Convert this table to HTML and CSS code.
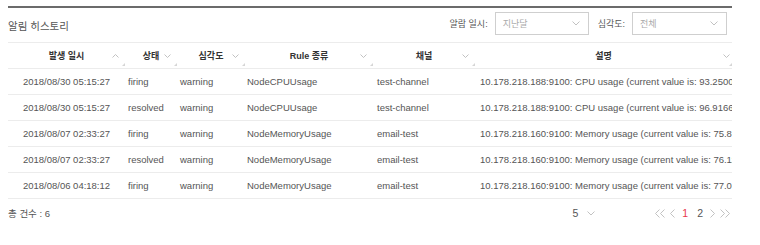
FILE: index.html
```html
<!DOCTYPE html>
<html lang="ko">
<head>
<meta charset="utf-8">
<link rel="stylesheet" href="styles.css">
</head>
<body>
<div class="panel">
  <div class="topbar">
    <div class="title">알림 히스토리</div>
    <div class="filters">
      <span class="label">알람 일시:</span>
      <div class="select"><span>지난달</span><svg class="chev" width="8" height="5" viewBox="0 0 8 5"><polyline points="0.5,0.5 4,4 7.5,0.5"/></svg></div>
      <span class="label label2">심각도:</span>
      <div class="select"><span>전체</span><svg class="chev" width="8" height="5" viewBox="0 0 8 5"><polyline points="0.5,0.5 4,4 7.5,0.5"/></svg></div>
    </div>
  </div>
  <div class="table">
    <div class="row head">
      <div class="th">발생 일시<svg class="sort" width="7" height="4" viewBox="0 0 7 4"><polyline points="0.5,3.5 3.5,0.5 6.5,3.5"/></svg></div>
      <div class="th">상태<svg class="sort" width="7" height="4" viewBox="0 0 7 4"><polyline points="0.5,0.5 3.5,3.5 6.5,0.5"/></svg></div>
      <div class="th">심각도<svg class="sort" width="7" height="4" viewBox="0 0 7 4"><polyline points="0.5,0.5 3.5,3.5 6.5,0.5"/></svg></div>
      <div class="th">Rule 종류<svg class="sort" width="7" height="4" viewBox="0 0 7 4"><polyline points="0.5,0.5 3.5,3.5 6.5,0.5"/></svg></div>
      <div class="th">채널<svg class="sort" width="7" height="4" viewBox="0 0 7 4"><polyline points="0.5,0.5 3.5,3.5 6.5,0.5"/></svg></div>
      <div class="th last">설명<svg class="sort" width="7" height="4" viewBox="0 0 7 4"><polyline points="0.5,0.5 3.5,3.5 6.5,0.5"/></svg></div>
    </div>
    <div class="row">
      <div class="td">2018/08/30 05:15:27</div><div class="td">firing</div><div class="td">warning</div><div class="td">NodeCPUUsage</div><div class="td">test-channel</div><div class="td">10.178.218.188:9100: CPU usage (current value is: 93.25000000000001)</div>
    </div>
    <div class="row">
      <div class="td">2018/08/30 05:15:27</div><div class="td">resolved</div><div class="td">warning</div><div class="td">NodeCPUUsage</div><div class="td">test-channel</div><div class="td">10.178.218.188:9100: CPU usage (current value is: 96.91666666666667)</div>
    </div>
    <div class="row">
      <div class="td">2018/08/07 02:33:27</div><div class="td">firing</div><div class="td">warning</div><div class="td">NodeMemoryUsage</div><div class="td">email-test</div><div class="td">10.178.218.160:9100: Memory usage (current value is: 75.88)</div>
    </div>
    <div class="row">
      <div class="td">2018/08/07 02:33:27</div><div class="td">resolved</div><div class="td">warning</div><div class="td">NodeMemoryUsage</div><div class="td">email-test</div><div class="td">10.178.218.160:9100: Memory usage (current value is: 76.11)</div>
    </div>
    <div class="row">
      <div class="td">2018/08/06 04:18:12</div><div class="td">firing</div><div class="td">warning</div><div class="td">NodeMemoryUsage</div><div class="td">email-test</div><div class="td">10.178.218.160:9100: Memory usage (current value is: 77.06)</div>
    </div>
  </div>
  <div class="footer">
    <div class="total">총 건수 : 6</div>
    <div class="pagesize"><span>5</span><svg class="chev" width="8" height="5" viewBox="0 0 8 5"><polyline points="0.5,0.5 4,4 7.5,0.5"/></svg></div>
    <div class="pager">
      <svg class="arr" width="10" height="9" viewBox="0 0 10 9"><polyline points="4.5,0.5 0.5,4.5 4.5,8.5"/><polyline points="9.5,0.5 5.5,4.5 9.5,8.5"/></svg>
      <svg class="arr" width="5" height="9" viewBox="0 0 5 9"><polyline points="4.5,0.5 0.5,4.5 4.5,8.5"/></svg>
      <span class="page current">1</span>
      <span class="page">2</span>
      <svg class="arr" width="5" height="9" viewBox="0 0 5 9"><polyline points="0.5,0.5 4.5,4.5 0.5,8.5"/></svg>
      <svg class="arr" width="10" height="9" viewBox="0 0 10 9"><polyline points="0.5,0.5 4.5,4.5 0.5,8.5"/><polyline points="5.5,0.5 9.5,4.5 5.5,8.5"/></svg>
    </div>
  </div>
</div>
</body>
</html>
```

FILE: styles.css
```css
html, body {
  margin: 0;
  background: #fff;
}
body {
  padding: 6px 0 0 8px;
  font-family: "Liberation Sans", Arial, "Noto Sans CJK KR", sans-serif;
  font-size: 9.5px;
  color: #555;
}
.panel {
  width: 724px;
  border-top: 2px solid #6b6b6b;
}
.topbar {
  height: 34px;
  display: flex;
  align-items: center;
  justify-content: space-between;
}
.title {
  font-size: 10.5px;
  color: #555;
  margin-top: 1px;
}
.filters {
  display: flex;
  align-items: center;
  margin-bottom: 3px;
  padding-right: 5px;
}
.label {
  color: #555;
  font-size: 9px;
  margin-right: 7px;
}
.label2 {
  margin-left: 9px;
}
.select {
  box-sizing: border-box;
  width: 94px;
  height: 23px;
  border: 1px solid #cfcfcf;
  display: flex;
  align-items: center;
  justify-content: space-between;
  padding: 0 8px 0 7px;
  color: #aaa;
  font-size: 9px;
}
.select + .label2 + .select {
  width: 95px;
}
.chev polyline, .sort polyline, .arr polyline {
  fill: none;
  stroke: #bbb;
  stroke-width: 0.9;
}
.table {
  border-top: 1px solid #ececec;
}
.row {
  display: grid;
  grid-template-columns: 117px 52px 68px 128px 102px 257px;
  height: 25px;
  border-bottom: 1px solid #ececec;
  align-items: center;
}
.th {
  position: relative;
  height: 100%;
  display: flex;
  align-items: center;
  justify-content: center;
  font-weight: bold;
  color: #333;
  font-size: 9px;
}
.th .sort {
  position: absolute;
  right: 6px;
  top: 11px;
}
.th::after {
  content: "";
  position: absolute;
  right: 0;
  bottom: 2px;
  border-left: 3px solid transparent;
  border-bottom: 3px solid #d6d6d6;
}
.th.last .sort {
  right: 2px;
}
.td {
  white-space: nowrap;
  overflow: hidden;
  padding-left: 3px;
}
.td:nth-child(1) {
  padding-left: 0;
  text-align: center;
}
.td:nth-child(4) {
  padding-left: 2px;
}
.td:nth-child(5) {
  padding-left: 4px;
}
.td:nth-child(6) {
  padding-left: 5px;
}
.footer {
  height: 28px;
  display: flex;
  align-items: center;
}
.total {
  font-size: 9.5px;
}
.pagesize {
  margin-left: auto;
  display: flex;
  align-items: center;
  gap: 9px;
  font-size: 10.5px;
  color: #555;
}
.pager {
  display: flex;
  align-items: center;
  margin-left: 60px;
  margin-right: 2px;
  gap: 5px;
  font-size: 10.5px;
}
.page {
  color: #555;
  padding: 0 2px;
}
.page.current {
  color: #e8374a;
}
```
